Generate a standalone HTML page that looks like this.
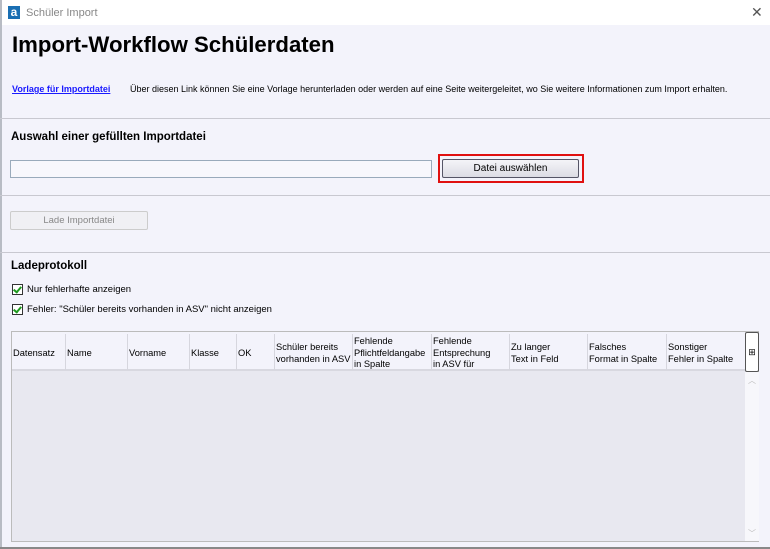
<!DOCTYPE html>
<html><head><meta charset="utf-8"><style>
*{margin:0;padding:0;box-sizing:border-box}
body{width:770px;height:549px;overflow:hidden;background:#f3f3fb;font-family:"Liberation Sans",sans-serif;position:relative;color:#000}
.a{position:absolute}
.t{font-size:11px;white-space:nowrap}
.hr{position:absolute;left:0;width:770px;height:1px;background:#c8c8d0}
.h{font-size:9.3px;line-height:11.5px;position:absolute;top:336px;white-space:nowrap}
.sep{position:absolute;top:334px;width:1px;height:36px;background:#d6d6de}
.cb{position:absolute;width:11px;height:11px;border:1px solid #333;background:#fff}
.cb:after{content:"";position:absolute;left:2px;top:0px;width:3px;height:6px;border:solid #1e9a1e;border-width:0 2px 2px 0;transform:rotate(40deg)}
</style></head><body>
<div class="a" style="left:0;top:0;width:770px;height:25px;background:#fff"></div>
<div class="a" style="left:0;top:0;width:2px;height:549px;background:#b8bcc4"></div>
<div class="a" style="left:8px;top:6px;width:12px;height:13px;background:#1a6fb3;color:#fff;font-size:12px;font-weight:bold;line-height:12px;text-align:center">a</div>
<div class="a t" style="left:26px;top:7px;color:#888;font-size:11px">Schüler Import</div>
<div class="a" style="left:751px;top:4px;font-size:14px;color:#555">✕</div>
<div class="a" style="left:12px;top:32px;font-size:22.2px;font-weight:bold">Import-Workflow Schülerdaten</div>
<div class="a t" style="left:12px;top:84px;font-size:9px;color:#1a1aff;text-decoration:underline;font-weight:bold">Vorlage für Importdatei</div>
<div class="a t" style="left:130px;top:84px;font-size:9px">Über diesen Link können Sie eine Vorlage herunterladen oder werden auf eine Seite weitergeleitet, wo Sie weitere Informationen zum Import erhalten.</div>
<div class="hr" style="top:118px"></div>
<div class="a t" style="left:11px;top:131px;font-weight:bold;font-size:11.5px">Auswahl einer gefüllten Importdatei</div>
<div class="a" style="left:10px;top:160px;width:422px;height:18px;border:1px solid #9ab;background:#f7f7fc"></div>
<div class="a" style="left:438px;top:154px;width:146px;height:29px;border:2px solid #e01010"></div>
<div class="a" style="left:442px;top:159px;width:137px;height:19px;border:1px solid #556;border-radius:2px;background:linear-gradient(#f4f4f8,#dcdce4);font-size:10px;text-align:center;line-height:17px">Datei auswählen</div>
<div class="hr" style="top:195px"></div>
<div class="a" style="left:10px;top:211px;width:138px;height:19px;border:1px solid #ccc;border-radius:2px;background:#f0f0f4;font-size:9.5px;text-align:center;line-height:17px;color:#888">Lade Importdatei</div>
<div class="hr" style="top:252px"></div>
<div class="a t" style="left:11px;top:260px;font-weight:bold;font-size:11.5px">Ladeprotokoll</div>
<div class="cb" style="left:12px;top:284px"></div>
<div class="a t" style="left:27px;top:284px;font-size:9.5px">Nur fehlerhafte anzeigen</div>
<div class="cb" style="left:12px;top:304px"></div>
<div class="a t" style="left:27px;top:304px;font-size:9.5px">Fehler: "Schüler bereits vorhanden in ASV" nicht anzeigen</div>
<div class="a" style="left:11px;top:331px;width:748px;height:211px;border:1px solid #bbb;background:#e8e8f0"></div>
<div class="a" style="left:12px;top:332px;width:733px;height:39px;background:#f3f3fb;border-bottom:2px solid #d8d8e0"></div>
<div class="a" style="left:745px;top:372px;width:14px;height:169px;background:#f7f7fb"></div>
<div class="a" style="left:745px;top:332px;width:14px;height:40px;border:1px solid #555;border-radius:2px;background:#fff;font-size:9px;text-align:center;line-height:38px">⊞</div>
<div class="a" style="left:748px;top:375px;font-size:8px;color:#bbb">︿</div>
<div class="a" style="left:748px;top:528px;font-size:8px;color:#bbb">﹀</div>
<div class="sep" style="left:65px"></div><div class="sep" style="left:127px"></div><div class="sep" style="left:189px"></div><div class="sep" style="left:236px"></div><div class="sep" style="left:274px"></div><div class="sep" style="left:352px"></div><div class="sep" style="left:431px"></div><div class="sep" style="left:509px"></div><div class="sep" style="left:587px"></div><div class="sep" style="left:666px"></div>
<div class="h" style="left:13px;top:348px">Datensatz</div>
<div class="h" style="left:67px;top:348px">Name</div>
<div class="h" style="left:129px;top:348px">Vorname</div>
<div class="h" style="left:191px;top:348px">Klasse</div>
<div class="h" style="left:238px;top:348px">OK</div>
<div class="h" style="left:276px;top:342px">Schüler bereits<br>vorhanden in ASV</div>
<div class="h" style="left:354px">Fehlende<br>Pflichtfeldangabe<br>in Spalte</div>
<div class="h" style="left:433px">Fehlende<br>Entsprechung<br>in ASV für</div>
<div class="h" style="left:511px;top:342px">Zu langer<br>Text in Feld</div>
<div class="h" style="left:589px;top:342px">Falsches<br>Format in Spalte</div>
<div class="h" style="left:668px;top:342px">Sonstiger<br>Fehler in Spalte</div>
<div class="a" style="left:0;top:547px;width:770px;height:2px;background:#888"></div>
</body></html>
